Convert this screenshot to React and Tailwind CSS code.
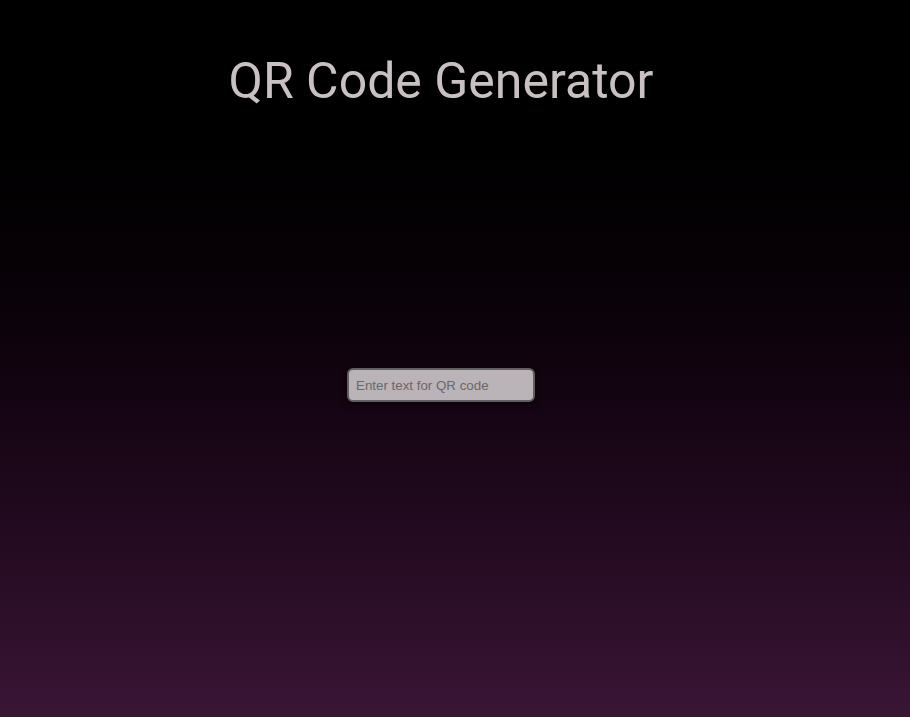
import React from 'react';

const App = () => {
  return (
    <div className="min-h-[717px] w-full bg-gradient-to-b from-[#000000] to-[#391535] pr-[28px] flex flex-col items-center" style={{ fontFamily: 'Roboto, sans-serif' }}>
      <h1 className="mt-[50px] text-[50px] leading-[62px] font-normal text-[#c9c0c1]">QR Code Generator</h1>
      <div className="mt-[256px]">
        <input
          type="text"
          placeholder="Enter text for QR code"
          className="w-[188px] h-[34px] px-[7px] rounded-[6px] border-2 border-[#606060] bg-[#bab3b8] text-[13.3333px] text-[#333] placeholder:text-[#6b676a] shadow-[0_2px_6px_rgba(0,0,0,0.5)] outline-none"
          style={{ fontFamily: '"Liberation Sans", Arial, sans-serif' }}
        />
      </div>
    </div>
  );
};

export default App;
